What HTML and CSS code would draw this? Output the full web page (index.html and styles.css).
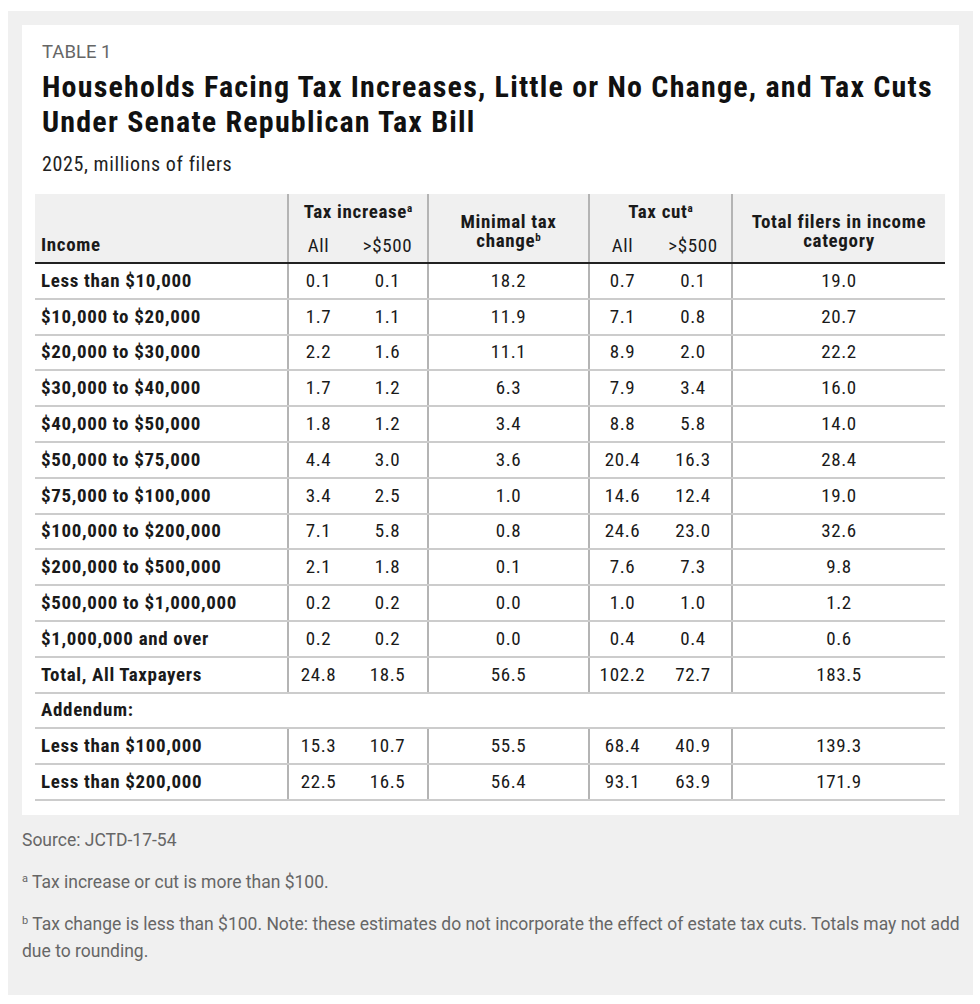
FILE: index.html
```html
<!DOCTYPE html>
<html>
<head>
<meta charset="utf-8">
<link rel="stylesheet" href="styles.css">
</head>
<body>
<div class="frame">
  <div class="card">
    <div class="eyebrow">TABLE 1</div>
    <h1 class="title">Households Facing Tax Increases, Little or No Change, and Tax Cuts Under Senate Republican Tax Bill</h1>
    <div class="subtitle">2025, millions of filers</div>
    <table class="data">
      <colgroup>
        <col class="c-income"><col class="c-a1"><col class="c-a2"><col class="c-min"><col class="c-b1"><col class="c-b2"><col class="c-tot">
      </colgroup>
      <thead>
        <tr class="h1">
          <th rowspan="2" class="lbl">Income</th>
          <th colspan="2" class="grp div">Tax increase<sup>a</sup></th>
          <th rowspan="2" class="mid div">Minimal tax<br>change<sup>b</sup></th>
          <th colspan="2" class="grp div">Tax cut<sup>a</sup></th>
          <th rowspan="2" class="mid div">Total filers in income<br>category</th>
        </tr>
        <tr class="h2">
          <th class="sub div">All</th>
          <th class="sub">&gt;$500</th>
          <th class="sub div">All</th>
          <th class="sub">&gt;$500</th>
        </tr>
      </thead>
      <tbody>
        <tr><td class="lbl">Less than $10,000</td><td class="div">0.1</td><td>0.1</td><td class="div">18.2</td><td class="div">0.7</td><td>0.1</td><td class="div">19.0</td></tr>
        <tr><td class="lbl">$10,000 to $20,000</td><td class="div">1.7</td><td>1.1</td><td class="div">11.9</td><td class="div">7.1</td><td>0.8</td><td class="div">20.7</td></tr>
        <tr><td class="lbl">$20,000 to $30,000</td><td class="div">2.2</td><td>1.6</td><td class="div">11.1</td><td class="div">8.9</td><td>2.0</td><td class="div">22.2</td></tr>
        <tr><td class="lbl">$30,000 to $40,000</td><td class="div">1.7</td><td>1.2</td><td class="div">6.3</td><td class="div">7.9</td><td>3.4</td><td class="div">16.0</td></tr>
        <tr><td class="lbl">$40,000 to $50,000</td><td class="div">1.8</td><td>1.2</td><td class="div">3.4</td><td class="div">8.8</td><td>5.8</td><td class="div">14.0</td></tr>
        <tr><td class="lbl">$50,000 to $75,000</td><td class="div">4.4</td><td>3.0</td><td class="div">3.6</td><td class="div">20.4</td><td>16.3</td><td class="div">28.4</td></tr>
        <tr><td class="lbl">$75,000 to $100,000</td><td class="div">3.4</td><td>2.5</td><td class="div">1.0</td><td class="div">14.6</td><td>12.4</td><td class="div">19.0</td></tr>
        <tr><td class="lbl">$100,000 to $200,000</td><td class="div">7.1</td><td>5.8</td><td class="div">0.8</td><td class="div">24.6</td><td>23.0</td><td class="div">32.6</td></tr>
        <tr><td class="lbl">$200,000 to $500,000</td><td class="div">2.1</td><td>1.8</td><td class="div">0.1</td><td class="div">7.6</td><td>7.3</td><td class="div">9.8</td></tr>
        <tr><td class="lbl">$500,000 to $1,000,000</td><td class="div">0.2</td><td>0.2</td><td class="div">0.0</td><td class="div">1.0</td><td>1.0</td><td class="div">1.2</td></tr>
        <tr><td class="lbl">$1,000,000 and over</td><td class="div">0.2</td><td>0.2</td><td class="div">0.0</td><td class="div">0.4</td><td>0.4</td><td class="div">0.6</td></tr>
        <tr><td class="lbl">Total, All Taxpayers</td><td class="div">24.8</td><td>18.5</td><td class="div">56.5</td><td class="div">102.2</td><td>72.7</td><td class="div">183.5</td></tr>
        <tr><td class="lbl" colspan="7">Addendum:</td></tr>
        <tr><td class="lbl">Less than $100,000</td><td class="div">15.3</td><td>10.7</td><td class="div">55.5</td><td class="div">68.4</td><td>40.9</td><td class="div">139.3</td></tr>
        <tr><td class="lbl">Less than $200,000</td><td class="div">22.5</td><td>16.5</td><td class="div">56.4</td><td class="div">93.1</td><td>63.9</td><td class="div">171.9</td></tr>
      </tbody>
    </table>
  </div>
  <div class="notes">
    <p>Source: JCTD-17-54</p>
    <p><sup>a</sup> Tax increase or cut is more than $100.</p>
    <p><sup>b</sup> Tax change is less than $100. Note: these estimates do not incorporate the effect of estate tax cuts. Totals may not add due to rounding.</p>
  </div>
</div>
</body>
</html>
```

FILE: styles.css
```css
html, body {
  margin: 0;
  padding: 0;
  background: #ffffff;
}

body {
  font-family: Roboto, "Liberation Sans", sans-serif;
}

.frame {
  margin: 11px 7px 11px 8px;
  padding: 14px 14px 15px 14px;
  background: #f0f0f0;
}

.card {
  background: #ffffff;
  padding: 17px 14px 14px 13px;
}

.eyebrow {
  margin-left: 7px;
  font-size: 18.5px;
  line-height: 20px;
  color: #666666;
  font-weight: 400;
}

.title {
  margin: 7px 0 0 7px;
  font-size: 30px;
  line-height: 35px;
  font-weight: 700;
  font-stretch: condensed;
  letter-spacing: 1.2px;
  color: #111111;
}

.subtitle {
  margin: 13px 0 0 7px;
  font-size: 20px;
  line-height: 24px;
  font-stretch: condensed;
  letter-spacing: 0.6px;
  color: #222222;
}

.data {
  margin-top: 18px;
  width: 910px;
  table-layout: fixed;
  border-collapse: collapse;
  font-stretch: condensed;
  font-size: 19px;
  letter-spacing: 0.65px;
  color: #1a1a1a;
}

.c-income { width: 253px; }
.c-a1 { width: 60px; }
.c-a2 { width: 80px; }
.c-min { width: 161px; }
.c-b1 { width: 66px; }
.c-b2 { width: 77px; }
.c-tot { width: 213px; }

.data thead th {
  background: #f0f0f0;
  font-weight: 700;
  text-align: center;
  padding: 0;
}

.data thead tr.h1 th {
  line-height: 20px;
}

.data thead tr.h1 th.grp {
  height: 28px;
  padding-bottom: 8px;
  vertical-align: bottom;
}

.data thead tr.h2 th {
  height: 32px;
  line-height: 20px;
  font-weight: 400;
  vertical-align: middle;
  border-bottom: 2px solid #222222;
}

.data thead th.lbl {
  text-align: left;
  padding: 0 6px 7px 6px;
  vertical-align: bottom;
  border-bottom: 2px solid #222222;
}

.data thead tr.h1 th.mid {
  vertical-align: top;
  padding: 18px 0 0 0;
  border-bottom: 2px solid #222222;
  line-height: 19px;
}

.data sup {
  font-size: 11px;
  line-height: 0;
  vertical-align: 6px;
  letter-spacing: 0;
}

.data .div {
  border-left: 2px solid #b4b4b4;
}

.data tbody td {
  height: 33.8px;
  padding: 0;
  line-height: 20px;
  text-align: center;
  border-bottom: 2px solid #cccccc;
  vertical-align: middle;
}

.data tbody td.lbl {
  text-align: left;
  font-weight: 700;
  padding-left: 6px;
}

.notes {
  padding-top: 12px;
  margin-right: -6px;
  color: #666666;
  font-size: 17.5px;
  line-height: 27px;
}

.notes p {
  margin: 0 0 15px 0;
}

.notes sup {
  font-size: 11px;
  line-height: 0;
  vertical-align: 6px;
}
```
